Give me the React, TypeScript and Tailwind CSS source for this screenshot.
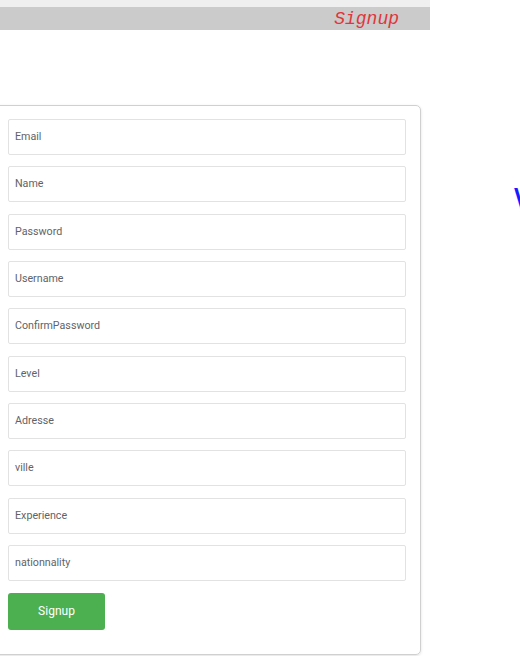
import React from "react";

const fields = [
  "Email",
  "Name",
  "Password",
  "Username",
  "ConfirmPassword",
  "Level",
  "Adresse",
  "ville",
  "Experience",
  "nationnality",
];

export default function App() {
  return (
    <div className="relative w-[520px] h-[656px] overflow-hidden bg-white" style={{ fontFamily: "Roboto, 'Noto Sans', sans-serif" }}>
      <div className="h-[7px] w-[430px] bg-[#efefef]" />
      <div className="h-[23px] w-[430px] bg-[#cbcbcb] flex items-center justify-end pr-[31px]">
        <span className="text-[18px] italic text-[#e0363b] leading-none" style={{ fontFamily: "'Liberation Mono', 'Courier New', monospace" }}>
          Signup
        </span>
      </div>
      <div className="flex">
        <div className="mt-[75px] ml-[-6px] w-[427px] rounded-[5px] border border-[#d0d0d0] shadow-[0_1px_3px_rgba(0,0,0,0.12)] pl-[13px] pr-[14px] pt-[13px] pb-[24px] flex flex-col gap-[11.33px]">
          {fields.map((f) => (
            <div key={f} className="h-[36px] w-full border border-[#e2e2e2] rounded-[2px] flex items-center pl-[6px] text-[10.7px] text-[#5f6368]">
              {f}
            </div>
          ))}
          <div className="mt-[0.7px]">
            <button className="h-[37px] w-[97px] rounded-[3px] bg-[#4caf50] text-white text-[12px]">Signup</button>
          </div>
        </div>
      </div>
      <div className="absolute left-[514px] top-[182px] text-[34px] leading-none text-[#1a1aff]" style={{ fontFamily: "'Liberation Sans', sans-serif" }}>
        W
      </div>
    </div>
  );
}
